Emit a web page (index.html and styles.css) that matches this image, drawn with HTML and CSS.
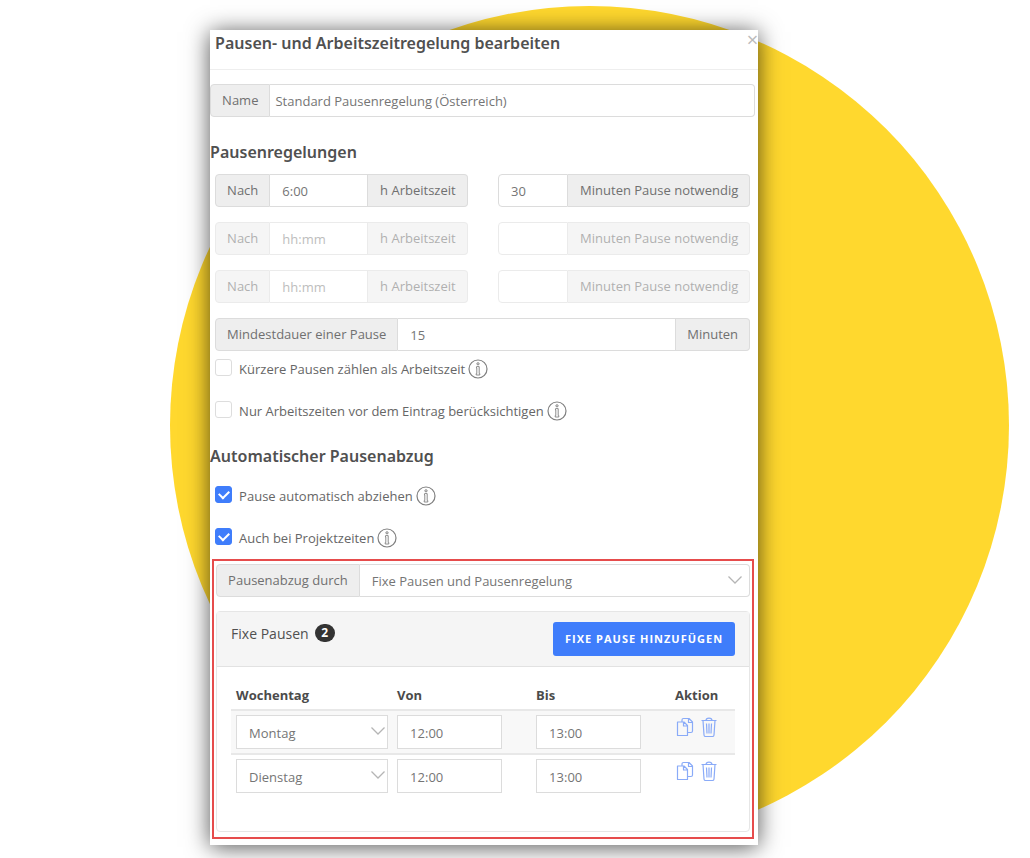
FILE: index.html
```html
<!DOCTYPE html>
<html lang="de">
<head>
<meta charset="utf-8">
<meta name="viewport" content="width=device-width, initial-scale=1">
<title>Pausen- und Arbeitszeitregelung bearbeiten</title>
<link rel="stylesheet" href="styles.css">
</head>
<body>
<svg class="sprite" aria-hidden="true">
  <symbol id="info" viewBox="0 0 20 20"><g fill="none" stroke="currentColor"><circle cx="10" cy="10" r="9" stroke-width="1.200"/><circle cx="10" cy="4.800" r="1.100"/><path d="M8.600 7.600h2.600v7h.6v1.400H8.200v-1.400h.6V9h-.4z" stroke-width=".9"/></g></symbol>
  <symbol id="chevron" viewBox="0 0 14 8"><path d="M.5.5 7 7 13.500.5" fill="none" stroke="currentColor" stroke-width="1.300"/></symbol>
  <symbol id="copy" viewBox="0 0 18 20"><g fill="none" stroke="currentColor" stroke-width="1.200" stroke-linejoin="round"><path d="M1.500 5h6.500l3.500 3.500v10h-10zM7.500 5v4h4"/><path d="M6 5V3q0-1.500 1.500-1.500H13l3.500 3.500v9q0 1.500-1.500 1.500h-3.500M12.500 1.500v4h4"/></g></symbol>
  <symbol id="trash" viewBox="0 0 16 20"><path d="M.5 3.500h15M5 3.500C5 .3 11 .3 11 3.500M2 3.500l1 14.500q.1 1.500 1.500 1.500h7q1.400 0 1.500-1.500L14 3.500M5.500 6.500l.5 10M8 6.500v10M10.500 6.500l-.5 10" fill="none" stroke="currentColor" stroke-width="1.200"/></symbol>
</svg>
<div class="stage">
  <div class="disc"></div>
  <main class="modal">
    <header class="modal-head">
      <h1>Pausen- und Arbeitszeitregelung bearbeiten</h1>
      <button class="close" type="button" aria-label="Schließen">×</button>
    </header>
    <form class="form">
      <div class="group name-group">
        <label class="addon" for="name">Name</label>
        <input class="field name-field" id="name" value="Standard Pausenregelung (Österreich)">
      </div>

      <h2>Pausenregelungen</h2>
      <div class="rules">
        <div class="rule">
          <div class="group hours"><label class="addon" for="h1">Nach</label><input class="field" id="h1" value="6:00"><span class="addon">h Arbeitszeit</span></div>
          <div class="group minutes"><input class="field" id="m1" value="30"><label class="addon" for="m1">Minuten Pause notwendig</label></div>
        </div>
        <div class="rule muted">
          <div class="group hours"><label class="addon" for="h2">Nach</label><input class="field" id="h2" placeholder="hh:mm" disabled><span class="addon">h Arbeitszeit</span></div>
          <div class="group minutes"><input class="field" id="m2" disabled><label class="addon" for="m2">Minuten Pause notwendig</label></div>
        </div>
        <div class="rule muted">
          <div class="group hours"><label class="addon" for="h3">Nach</label><input class="field" id="h3" placeholder="hh:mm" disabled><span class="addon">h Arbeitszeit</span></div>
          <div class="group minutes"><input class="field" id="m3" disabled><label class="addon" for="m3">Minuten Pause notwendig</label></div>
        </div>
        <div class="group">
          <label class="addon" for="min">Mindestdauer einer Pause</label><input class="field" id="min" value="15"><span class="addon">Minuten</span>
        </div>
      </div>
      <div class="checks">
        <div class="check"><input type="checkbox" id="c1"><label for="c1">Kürzere Pausen zählen als Arbeitszeit</label><svg class="info"><use href="#info"/></svg></div>
        <div class="check"><input type="checkbox" id="c2"><label for="c2">Nur Arbeitszeiten vor dem Eintrag berücksichtigen</label><svg class="info"><use href="#info"/></svg></div>
      </div>

      <h2>Automatischer Pausenabzug</h2>
      <div class="checks">
        <div class="check"><input type="checkbox" id="c3" checked><label for="c3">Pause automatisch abziehen</label><svg class="info"><use href="#info"/></svg></div>
        <div class="check"><input type="checkbox" id="c4" checked><label for="c4">Auch bei Projektzeiten</label><svg class="info"><use href="#info"/></svg></div>
      </div>

      <section class="highlight">
        <div class="group">
          <label class="addon" for="mode">Pausenabzug durch</label>
          <div class="picker"><select class="field" id="mode"><option>Fixe Pausen und Pausenregelung</option></select><svg class="chevron"><use href="#chevron"/></svg></div>
        </div>
        <div class="card">
          <div class="card-head">
            <h3>Fixe Pausen <span class="badge">2</span></h3>
            <button class="add" type="button">FIXE PAUSE HINZUFÜGEN</button>
          </div>
          <div class="card-body">
            <table>
              <thead><tr><th class="col-day">Wochentag</th><th class="col-from">Von</th><th class="col-to">Bis</th><th>Aktion</th></tr></thead>
              <tbody>
                <tr>
                  <td><div class="picker day"><select class="field" aria-label="Wochentag"><option>Montag</option></select><svg class="chevron"><use href="#chevron"/></svg></div></td>
                  <td><input class="field time" aria-label="Von" value="12:00"></td>
                  <td><input class="field time" aria-label="Bis" value="13:00"></td>
                  <td><div class="actions"><button type="button" aria-label="Kopieren"><svg class="copy"><use href="#copy"/></svg></button><button type="button" aria-label="Löschen"><svg class="trash"><use href="#trash"/></svg></button></div></td>
                </tr>
                <tr>
                  <td><div class="picker day"><select class="field" aria-label="Wochentag"><option>Dienstag</option></select><svg class="chevron"><use href="#chevron"/></svg></div></td>
                  <td><input class="field time" aria-label="Von" value="12:00"></td>
                  <td><input class="field time" aria-label="Bis" value="13:00"></td>
                  <td><div class="actions"><button type="button" aria-label="Kopieren"><svg class="copy"><use href="#copy"/></svg></button><button type="button" aria-label="Löschen"><svg class="trash"><use href="#trash"/></svg></button></div></td>
                </tr>
              </tbody>
            </table>
          </div>
        </div>
      </section>
    </form>
  </main>
</div>
</body>
</html>
```

FILE: styles.css
```css
* { box-sizing: border-box; }
body {
  margin: 0;
  background: #fff;
  color: #666;
  font: 13px/20px "Open Sans", "Noto Sans", sans-serif;
}
input, select, button { font: inherit; color: inherit; }
button { cursor: pointer; }
h1, h2, h3 { margin: 0; color: #505050; font-weight: 600; }
.sprite { position: absolute; width: 0; height: 0; }

.stage {
  position: relative;
  overflow: hidden;
  padding: 30px 26.4% 13px 20.4%;
}
.disc {
  position: absolute;
  top: 6px;
  left: 16.5%;
  width: 81.5%;
  aspect-ratio: 1;
  border-radius: 50%;
  background: #ffd82e;
}
.modal {
  position: relative;
  background: #fff;
  padding-bottom: 6px;
  box-shadow: 0 2px 22px rgba(0, 0, 0, .68);
}
.modal-head {
  display: flex;
  justify-content: space-between;
  align-items: flex-start;
  height: 40px;
  padding-left: 5px;
  border-bottom: 1px solid #eee;
}
h1, h2 { font-family: "Noto Sans", "Open Sans", sans-serif; font-size: 16px; }
h1 { line-height: 26px; }
.close {
  padding: 0;
  border: 0;
  background: none;
  color: #bbb;
  font-size: 20px;
  line-height: 20px;
}

.group { display: flex; height: 33px; }
.addon {
  flex: none;
  padding: 0 11px;
  border: 1px solid #dcdcdc;
  background: #eee;
  line-height: 31px;
  color: #707070;
  white-space: nowrap;
}
.field {
  flex: 1;
  min-width: 0;
  width: 100%;
  height: 33px;
  padding: 1px 12px 0;
  border: 1px solid #dcdcdc;
  border-radius: 0;
  background: #fff;
  color: #757575;
  outline: 0;
  appearance: none;
}
.field::placeholder { color: #888; }
.group > * + .addon, .group > * + .field, .group .picker .field { border-left: 0; }
.group > :first-child { border-radius: 4px 0 0 4px; }
.group > :last-child { border-radius: 0 4px 4px 0; }

.name-group { margin: 14px 3px 0 0; }
.name-group .field { padding-left: 5px; }
h2 { line-height: 24px; }
.name-group + h2 { margin: 23px 0 10px; }
.rules { display: grid; gap: 15px; padding: 0 8px 0 5px; }
.rule { display: grid; grid-template-columns: 253fr 252fr; gap: 30px; }
.minutes .addon { width: 182px; padding-left: 12px; }
.hours .addon:last-child { width: 100px; padding-left: 12px; }
.muted { opacity: .55; }

.checks { display: grid; gap: 22px; padding: 8px 0 0 5px; }
.check { display: flex; align-items: center; height: 20px; }
.check input {
  flex: none;
  display: grid;
  place-content: center;
  width: 17px;
  height: 17px;
  margin: 0 7px 3px 0;
  border: 1px solid #ddd;
  border-radius: 3px;
  background: #fff;
  appearance: none;
}
.check input:checked { background: #3f7dfb; border-color: #3f7dfb; }
.check input:checked::before {
  content: "";
  width: 8px;
  height: 5px;
  margin-bottom: 2px;
  border: solid #fff;
  border-width: 0 0 2px 2px;
  transform: rotate(-45deg);
}
.info { width: 20px; height: 20px; margin-left: 3px; color: #808080; }
.checks + h2 { margin-top: 23px; }
h2 + .checks { padding-top: 18px; }

.highlight {
  margin: 11px 4px 0 2px;
  padding: 3px 2px 5px;
  border: 2px solid #e64c4c;
}
.picker { position: relative; flex: 1; }
.picker .field { display: block; border-radius: inherit; }
.chevron {
  position: absolute;
  right: 8px;
  top: 12px;
  width: 14px;
  height: 8px;
  color: #b5b5b5;
  pointer-events: none;
}
.card { margin-top: 14px; border: 1px solid #e6e6e6; border-radius: 4px; }
.card-head {
  display: flex;
  justify-content: space-between;
  padding: 10px 14px;
  border-bottom: 1px solid #e2e2e2;
  background: #f5f5f5;
}
h3 { display: flex; gap: 6px; height: 24px; font-size: 14px; line-height: 24px; font-weight: 400; }
.badge {
  width: 20px;
  height: 18px;
  margin-top: 2px;
  border-radius: 9px;
  background: #333;
  color: #fff;
  font-size: 12px;
  line-height: 18px;
  font-weight: 700;
  text-align: center;
}
.add {
  height: 34px;
  padding: 0 12px;
  border: 0;
  border-radius: 3px;
  background: #3f7dfb;
  color: #fff;
  font-size: 11px;
  font-weight: 700;
  letter-spacing: 1px;
}
.card-body { padding: 14px 14px 34px; }
table { width: 100%; border-collapse: collapse; table-layout: fixed; }
th { padding: 4px 5px; text-align: left; font-weight: 700; color: #4b4b4b; }
th:last-child { text-align: center; }
.col-day { width: 161px; }
.col-from { width: 139px; }
.col-to { width: 127px; }
td { padding: 4px 5px; border-top: 2px solid #e8e8e8; vertical-align: top; }
tbody tr:first-child { background: #f8f8f8; }
td .field { display: block; height: 34px; }
.day { width: 152px; }
.day .chevron { right: 3px; }
.time { width: 105px; }
.actions { display: flex; justify-content: center; gap: 7px; padding-top: 2px; }
.actions button { display: block; padding: 0; border: 0; background: none; color: #8aabf8; }
.actions svg { display: block; width: 18px; height: 20px; }
.actions .trash { width: 16px; }
```
